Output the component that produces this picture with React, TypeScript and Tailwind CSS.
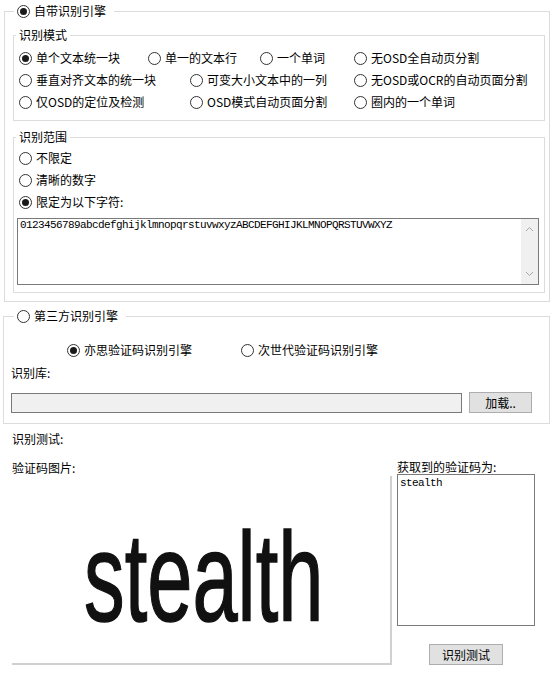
import React from 'react';
import clsx from 'clsx';

interface RadioProps {
  label: string;
  checked?: boolean;
  className?: string;
}

const Radio: React.FC<RadioProps> = ({ label, checked, className }) => {
  return (
    <label className={clsx('flex items-center gap-1 whitespace-nowrap', className)}>
      <span className="flex h-[13px] w-[13px] shrink-0 items-center justify-center rounded-full border border-[#333333] bg-white">
        {checked && <span className="h-[7px] w-[7px] rounded-full bg-[#1a1a1a]" />}
      </span>
      <span className="leading-4">{label}</span>
    </label>
  );
};

const Chevron: React.FC<{ down?: boolean }> = ({ down }) => (
  <svg width="9" height="6" viewBox="0 0 9 6" className="text-[#a8a8a8]">
    <polyline
      points={down ? '1,1 4.5,4.5 8,1' : '1,5 4.5,1.5 8,5'}
      fill="none"
      stroke="currentColor"
      strokeWidth="1"
    />
  </svg>
);

const App: React.FC = () => {
  return (
    <div className="h-[685px] w-[555px] overflow-hidden bg-white text-[12px] text-black font-['Noto_Sans_CJK_SC','Noto_Sans',sans-serif]">
      {/* built-in engine */}
      <fieldset className="mt-[3px] ml-1 w-[546px] border border-[#dcdcdc] pb-2">
        <legend className="ml-[9px] pl-[3px] pr-2">
          <Radio label="自带识别引擎" checked className="h-4" />
        </legend>

        <fieldset className="mt-2 ml-2 w-[532px] border border-[#dcdcdc] pt-1 pb-[7px]">
          <legend className="ml-[2px] px-[3px] leading-4">识别模式</legend>
          <div className="flex pl-[5px]">
            <Radio label="单个文本统一块" checked className="h-[22px] w-[129px]" />
            <Radio label="单一的文本行" className="h-[22px] w-[112px]" />
            <Radio label="一个单词" className="h-[22px] w-[94px]" />
            <Radio label="无OSD全自动页分割" className="h-[22px]" />
          </div>
          <div className="flex pl-[5px]">
            <Radio label="垂直对齐文本的统一块" className="h-[22px] w-[171px]" />
            <Radio label="可变大小文本中的一列" className="h-[22px] w-[164px]" />
            <Radio label="无OSD或OCR的自动页面分割" className="h-[22px]" />
          </div>
          <div className="flex pl-[5px]">
            <Radio label="仅OSD的定位及检测" className="h-[22px] w-[171px]" />
            <Radio label="OSD模式自动页面分割" className="h-[22px] w-[164px]" />
            <Radio label="圈内的一个单词" className="h-[22px]" />
          </div>
        </fieldset>

        <fieldset className="mt-2 ml-2 w-[532px] border border-[#dcdcdc] pt-[2px] pb-[7px]">
          <legend className="ml-[2px] px-[3px] leading-4">识别范围</legend>
          <div className="pl-[5px]">
            <Radio label="不限定" className="h-[22px]" />
            <Radio label="清晰的数字" className="h-[22px]" />
            <Radio label="限定为以下字符:" checked className="h-[22px]" />
          </div>
          <div className="mt-[5px] ml-[3px] flex h-[67px] w-[522px] border border-[#7a7a7a] bg-white">
            <div className="flex-1 pl-[2px] leading-3 text-[11px] tracking-[-0.6px] font-['Liberation_Mono',monospace]">
              0123456789abcdefghijklmnopqrstuvwxyzABCDEFGHIJKLMNOPQRSTUVWXYZ
            </div>
            <div className="flex w-[17px] flex-col items-center justify-between bg-[#f0f0f0] py-[7px]">
              <Chevron />
              <Chevron down />
            </div>
          </div>
        </fieldset>
      </fieldset>

      {/* third-party engine */}
      <fieldset className="mt-[6px] ml-[3px] w-[547px] border border-[#dcdcdc] pb-[10px]">
        <legend className="ml-[10px] pl-[3px] pr-2">
          <Radio label="第三方识别引擎" className="h-4" />
        </legend>
        <div className="mt-[15px] flex pl-[63px]">
          <Radio label="亦思验证码识别引擎" checked className="h-[22px] w-[174px]" />
          <Radio label="次世代验证码识别引擎" className="h-[22px]" />
        </div>
        <div className="mt-1 pl-[7px] leading-4">识别库:</div>
        <div className="mt-[11px] flex items-center pl-[7px]">
          <div className="h-5 w-[451px] border border-[#7a7a7a] bg-[#f0f0f0]" />
          <button className="ml-[7px] h-[21px] w-[63px] border border-[#adadad] bg-[#e1e1e1] leading-4">
            加载..
          </button>
        </div>
      </fieldset>

      {/* test area */}
      <div className="pl-3">
        <div className="mt-[7px] leading-4">识别测试:</div>
        <div className="mt-[13px] flex">
          <div className="w-[380px]">
            <div className="leading-4">验证码图片:</div>
            <div className="h-[189px] overflow-hidden border-r-2 border-b-2 border-[#d0d0d0] pt-[39px] pl-[72px]">
              <span className="inline-block origin-left scale-x-[0.645] text-[126px] leading-none text-[#111] blur-[0.5px] [-webkit-text-stroke:1.5px_#111] font-['Liberation_Sans',Arial,sans-serif]">
                stealth
              </span>
            </div>
          </div>
          <div className="ml-[5px] flex w-[138px] flex-col">
            <div className="leading-[14px] whitespace-nowrap">获取到的验证码为:</div>
            <div className="h-[152px] border border-[#7a7a7a] bg-white pt-[2px] pl-[2px] leading-3 text-[11px] tracking-[-0.6px] font-['Liberation_Mono',monospace]">
              stealth
            </div>
            <button className="mt-[18px] h-[21px] w-[74px] self-center border border-[#adadad] bg-[#e1e1e1] leading-4">
              识别测试
            </button>
          </div>
        </div>
      </div>
    </div>
  );
};

export default App;
